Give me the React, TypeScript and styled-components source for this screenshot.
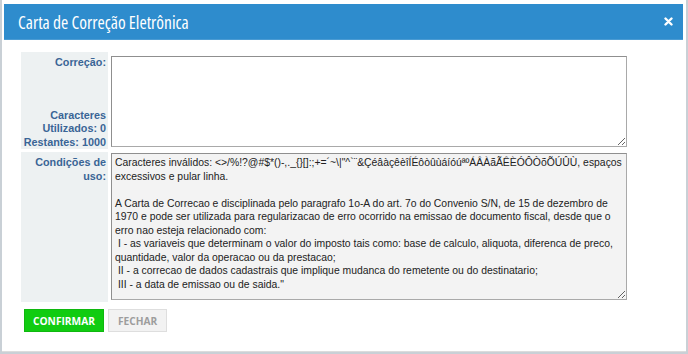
import styled, { createGlobalStyle } from 'styled-components';

const GlobalStyle = createGlobalStyle`
  html, body {
    margin: 0;
    padding: 0;
    background: #c9d0d6;
  }
  * {
    box-sizing: border-box;
  }
`;

const INVALID_CHARS = '<>/%!?@#$*()-,._{}[]:;+=´~\\|"^`¨&ÇéâàçêèîÍÉôòûùáíóúªºÁÂÀãÃÊÈÓÔÒõÕÚÛÙ';

const CONDITIONS = [
  `Caracteres inválidos: ${INVALID_CHARS}, espaços`,
  'excessivos e pular linha.',
  '',
  'A Carta de Correcao e disciplinada pelo paragrafo 1o-A do art. 7o do Convenio S/N, de 15 de dezembro de',
  '1970 e pode ser utilizada para regularizacao de erro ocorrido na emissao de documento fiscal, desde que o',
  'erro nao esteja relacionado com:',
  ' I - as variaveis que determinam o valor do imposto tais como: base de calculo, aliquota, diferenca de preco,',
  'quantidade, valor da operacao ou da prestacao;',
  ' II - a correcao de dados cadastrais que implique mudanca do remetente ou do destinatario;',
  ' III - a data de emissao ou de saida."',
].join('\n');

const MAX_CHARS = 1000;

const App = () => {
  const used = 0;

  return (
    <>
      <GlobalStyle />
      <Modal>
        <Header>
          <Title>Carta de Correção Eletrônica</Title>
          <CloseButton aria-label="Fechar">
            <svg width="9" height="9" viewBox="0 0 9 9">
              <path d="M1.5 1.5 L7.5 7.5 M7.5 1.5 L1.5 7.5" stroke="#fff" strokeWidth="2.4" strokeLinecap="round" />
            </svg>
          </CloseButton>
        </Header>
        <Body>
          <FormGrid>
            <LabelCell $height={97}>
              <span>Correção:</span>
              <Counter>
                Caracteres
                <br />
                Utilizados: {used}
                <br />
                Restantes: {MAX_CHARS - used}
              </Counter>
            </LabelCell>
            <FieldCell>
              <TextArea $height={91} $offset={4} maxLength={MAX_CHARS} />
            </FieldCell>
            <LabelCell $height={150}>
              <span>
                Condições de
                <br />
                uso:
              </span>
            </LabelCell>
            <FieldCell>
              <TextArea $height={147} $offset={1} $readOnly readOnly value={CONDITIONS} />
            </FieldCell>
          </FormGrid>
          <Actions>
            <Button $primary>CONFIRMAR</Button>
            <Button>FECHAR</Button>
          </Actions>
        </Body>
      </Modal>
    </>
  );
};

export default App;

const Modal = styled.div`
  margin-left: 2px;
  width: 684px;
  height: 352px;
  padding: 4px 3px 0 2px;
  background: #fff;
  border-bottom: 1px solid #dcdcdc;
`;

const Header = styled.div`
  height: 36px;
  display: flex;
  align-items: center;
  justify-content: space-between;
  padding: 0 9px 0 14px;
  background: #2e8ccd;
  border-bottom: 1px solid #4a9bd3;
`;

const Title = styled.h4`
  margin: 0;
  color: #fff;
  font-family: 'Open Sans', sans-serif;
  font-stretch: 75%;
  font-weight: 400;
  font-size: 17.5px;
  line-height: 22px;
`;

const CloseButton = styled.button`
  display: flex;
  align-items: center;
  justify-content: center;
  width: 12px;
  height: 12px;
  padding: 0;
  border: none;
  background: transparent;
  cursor: pointer;
`;

const Body = styled.div`
  padding: 12px 0 0 17px;
`;

const FormGrid = styled.div`
  display: grid;
  grid-template-columns: 87px 516px;
  column-gap: 3px;
  row-gap: 3px;
`;

const LabelCell = styled.div<{ $height: number }>`
  height: ${({ $height }) => $height}px;
  display: flex;
  flex-direction: column;
  justify-content: space-between;
  padding: 3px 2px 0 0;
  background: #edf1f2;
  color: #3a6596;
  font-family: 'Liberation Sans', Arial, sans-serif;
  font-weight: 700;
  font-size: 10.8px;
  line-height: 14px;
  text-align: right;
`;

const Counter = styled.div`
  line-height: 13.5px;
`;

const FieldCell = styled.div`
  display: flex;
  flex-direction: column;
`;

const TextArea = styled.textarea<{ $height: number; $offset: number; $readOnly?: boolean }>`
  display: block;
  width: 100%;
  height: ${({ $height }) => $height}px;
  margin: ${({ $offset }) => $offset}px 0 0;
  padding: 2px 1px 2px 3px;
  border: 1px solid #a9a9a9;
  border-top-color: #8f8f8f;
  border-left-color: #8f8f8f;
  border-radius: 0;
  background: ${({ $readOnly }) => ($readOnly ? '#f3f3f3' : '#fff')};
  color: #222;
  font-family: 'Liberation Sans', Arial, sans-serif;
  font-size: 10.4px;
  line-height: 13.5px;
  white-space: pre-wrap;
  overflow: hidden;
  resize: vertical;
  outline: none;
`;

const Actions = styled.div`
  display: flex;
  gap: 4px;
  margin-top: 7px;
  padding-left: 3px;
`;

const Button = styled.button<{ $primary?: boolean }>`
  height: 23px;
  padding: 0 ${({ $primary }) => ($primary ? 8 : 9)}px;
  border: 1px solid ${({ $primary }) => ($primary ? '#0fb80f' : '#dedede')};
  border-radius: 0;
  background: ${({ $primary }) => ($primary ? '#11cc11' : '#f2f2f2')};
  color: ${({ $primary }) => ($primary ? '#fff' : '#9d9d9d')};
  font-family: 'Open Sans', sans-serif;
  font-weight: 700;
  font-size: 10.2px;
  cursor: pointer;
`;
